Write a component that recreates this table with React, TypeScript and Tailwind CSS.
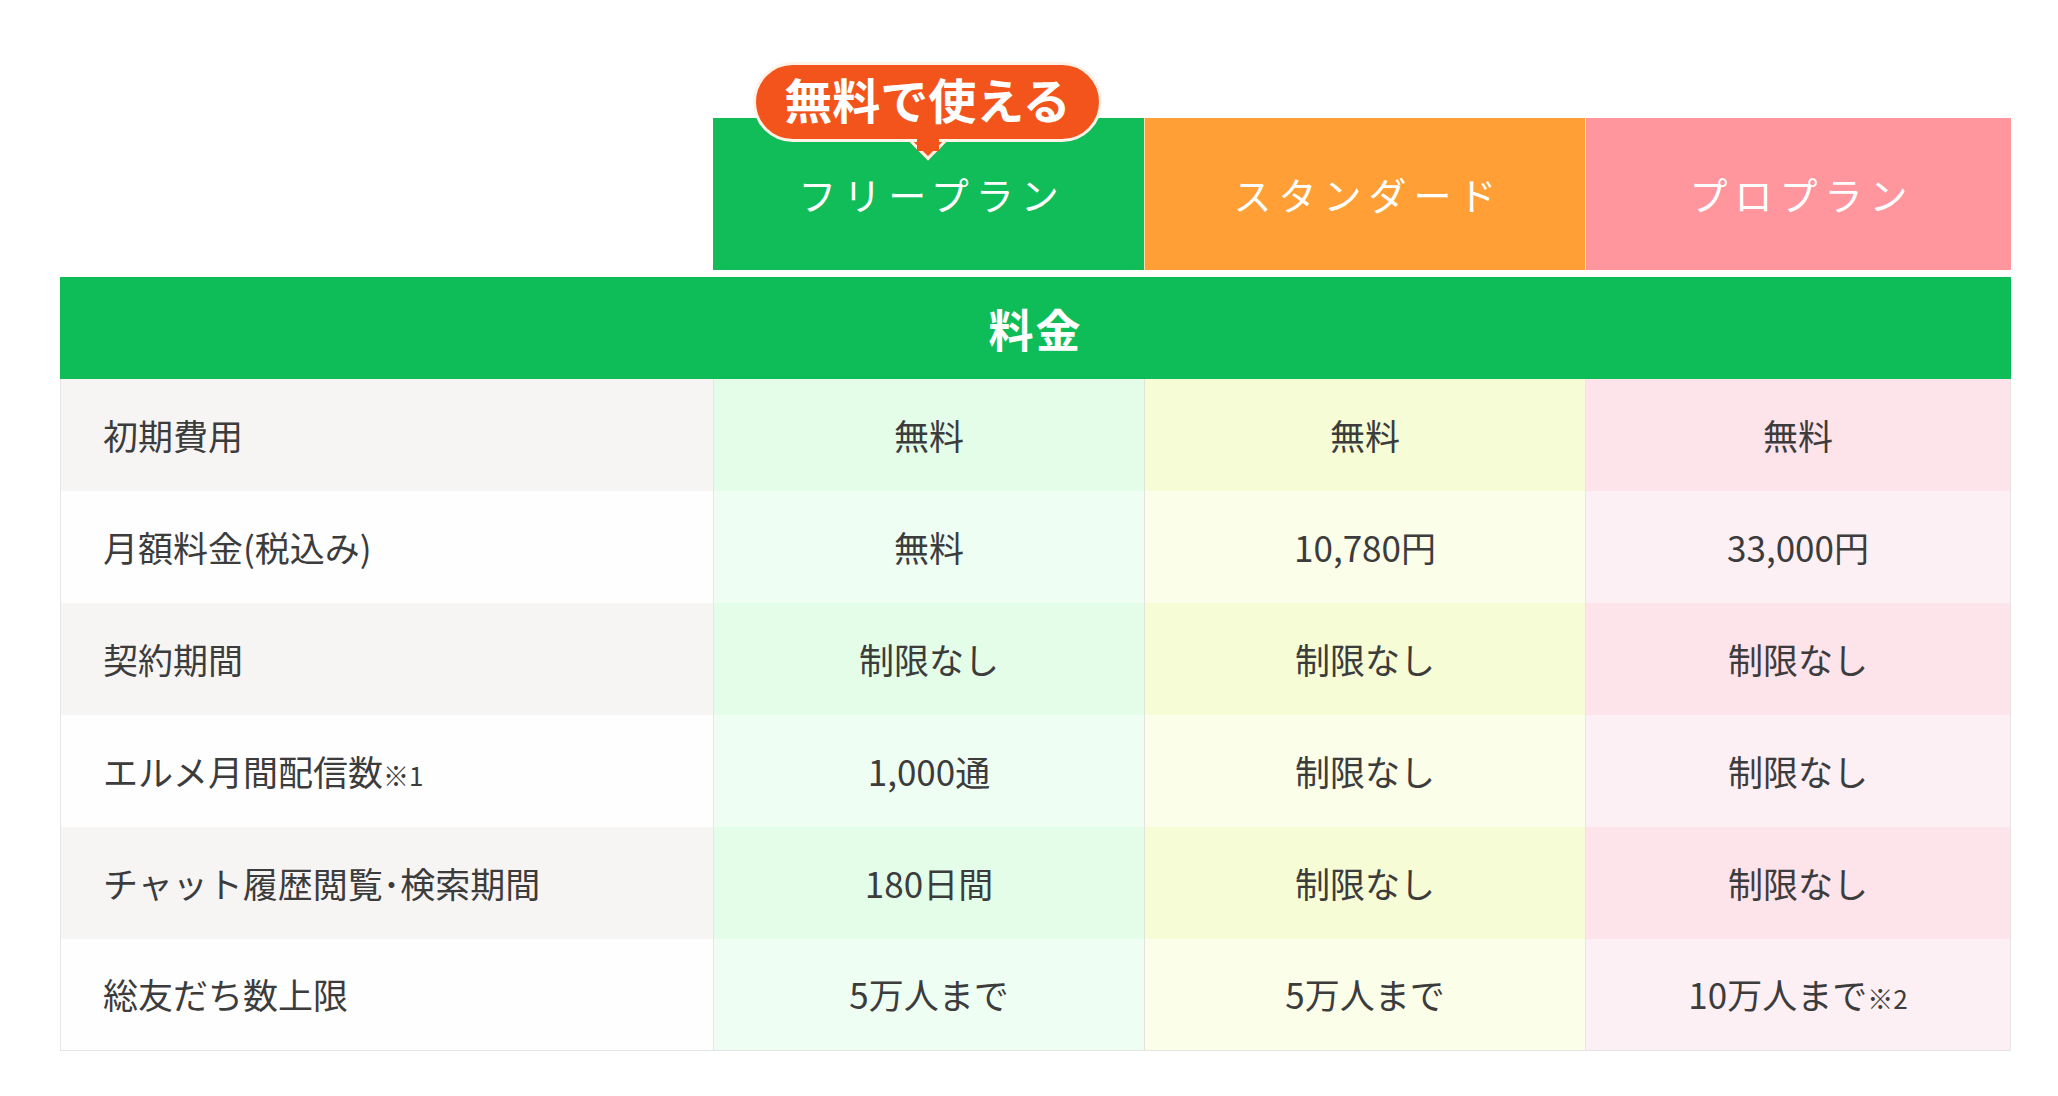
import React from "react";

const FONT = { fontFamily: '"Noto Sans CJK JP", "Noto Sans", sans-serif' };

type Row = { label: React.ReactNode; free: React.ReactNode; std: React.ReactNode; pro: React.ReactNode };

const Note = ({ children }: { children: React.ReactNode }) => (
  <span className="text-[26px] align-baseline">{children}</span>
);

const rows: Row[] = [
  { label: "初期費用", free: "無料", std: "無料", pro: "無料" },
  { label: "月額料金(税込み)", free: "無料", std: "10,780円", pro: "33,000円" },
  { label: "契約期間", free: "制限なし", std: "制限なし", pro: "制限なし" },
  {
    label: (
      <>
        エルメ月間配信数<Note>※1</Note>
      </>
    ),
    free: "1,000通",
    std: "制限なし",
    pro: "制限なし",
  },
  { label: "チャット履歴閲覧･検索期間", free: "180日間", std: "制限なし", pro: "制限なし" },
  {
    label: "総友だち数上限",
    free: "5万人まで",
    std: "5万人まで",
    pro: (
      <>
        10万人まで<Note>※2</Note>
      </>
    ),
  },
];

export default function App() {
  return (
    <div className="min-h-[1096px] w-full bg-white pt-[118px] pl-[60px]" style={FONT}>
      <div className="w-[1951px]">
        {/* Plan headers */}
        <div className="grid grid-cols-[653px_431px_441px_426px] h-[152px]">
          <div />
          <div className="relative bg-[#10bd59] flex items-center justify-center">
            <span className="text-white text-[38px] tracking-[7px] leading-none pl-[7px]">フリープラン</span>
            {/* badge */}
            <div className="absolute left-[40px] top-[-56px] w-[349px] h-[80px]">
              <div className="absolute left-1/2 bottom-[-13px] -translate-x-1/2 w-[26px] h-[26px] rotate-45 bg-[#f2541b] border-r-[3px] border-b-[3px] border-[#fff3e8]" />
              <div className="relative h-full w-full rounded-full bg-[#f2541b] border-[3px] border-[#fff3e8] flex items-center justify-center pb-[8px]">
                <span className="text-white text-[48px] font-bold leading-none">無料で使える</span>
              </div>
              <div className="absolute left-1/2 bottom-[-9px] -translate-x-1/2 w-[22px] h-[12px] bg-[#f2541b]" />
            </div>
          </div>
          <div className="bg-[#ff9f35] border-l border-[#ffd9b0] flex items-center justify-center">
            <span className="text-white text-[38px] tracking-[7px] leading-none pl-[7px]">スタンダード</span>
          </div>
          <div className="bg-[#ff969e] border-l border-[#ffe0e2] flex items-center justify-center">
            <span className="text-white text-[38px] tracking-[7px] leading-none pl-[7px]">プロプラン</span>
          </div>
        </div>

        {/* 料金 bar */}
        <div className="mt-[7px] h-[102px] bg-[#0fbd58] flex items-center justify-center">
          <span className="text-white text-[45px] font-bold leading-none tracking-[2px]">料金</span>
        </div>

        {/* rows */}
        {rows.map((r, i) => {
          const odd = i % 2 === 0;
          const last = i === rows.length - 1;
          return (
            <div
              key={i}
              className={
                "grid grid-cols-[653px_431px_441px_426px] h-[112px] text-[#3c3c3c] text-[35px] leading-none " +
                (last ? "border-b border-[#e4e4e4]" : "")
              }
            >
              <div
                className={
                  "flex items-center pl-[42px] pb-[2px] border-l border-[#e6e6e6] " +
                  (odd ? "bg-[#f7f5f4]" : "bg-[#fefefe]")
                }
              >
                <span>{r.label}</span>
              </div>
              <div
                className={
                  "flex items-center justify-center pb-[2px] border-l border-[#e3e8e4] " +
                  (odd ? "bg-[#e3fde8]" : "bg-[#effef3]")
                }
              >
                <span>{r.free}</span>
              </div>
              <div
                className={
                  "flex items-center justify-center pb-[2px] border-l border-[#e2e2dc] " +
                  (odd ? "bg-[#f6fcd5]" : "bg-[#fbfee9]")
                }
              >
                <span>{r.std}</span>
              </div>
              <div
                className={
                  "flex items-center justify-center pb-[2px] border-l border-r border-[#ebe4e6] " +
                  (odd ? "bg-[#fde3ea]" : "bg-[#fdf0f4]")
                }
              >
                <span>{r.pro}</span>
              </div>
            </div>
          );
        })}
      </div>
    </div>
  );
}
